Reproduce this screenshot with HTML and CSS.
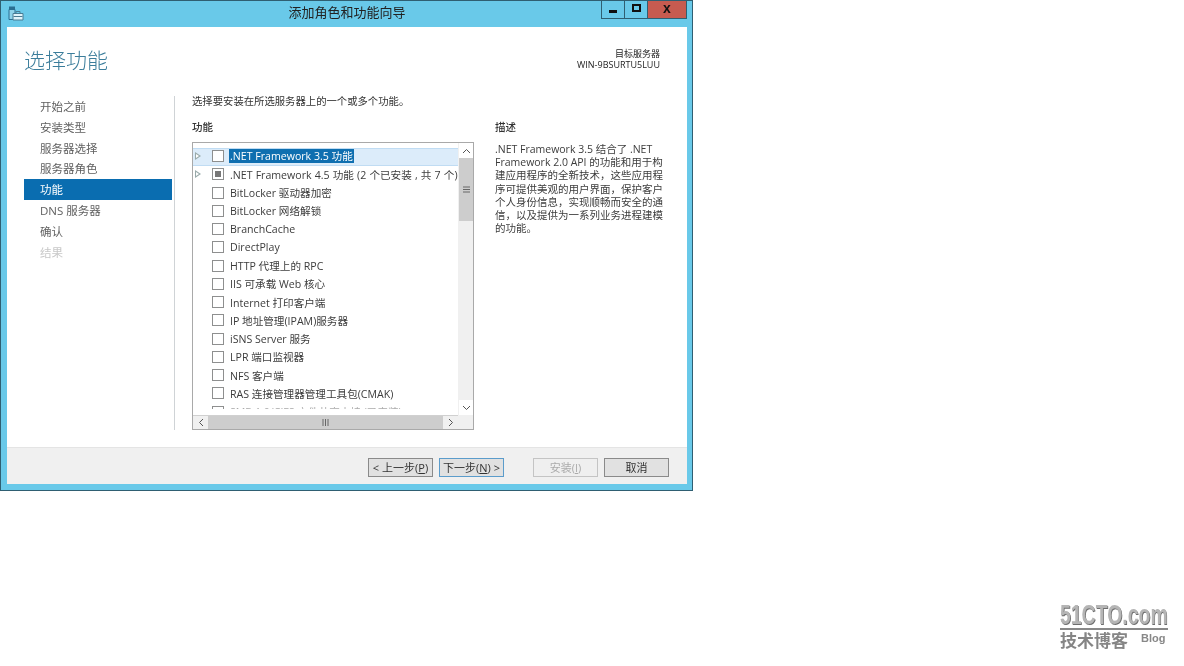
FILE: index.html
```html
<!DOCTYPE html>
<html lang="zh-CN">
<head>
<meta charset="utf-8">
<title>添加角色和功能向导</title>
<link rel="stylesheet" href="styles.css">
</head>
<body>
<div class="window">
  <div class="titlebar">
    <svg class="app-icon" width="16" height="15" viewBox="0 0 16 15"><path d="M1 0.500h6v3H1z" fill="#2a6f92"/><path d="M1 3.500h6v10H1z" fill="#8fd3ea" stroke="#2a6f92"/><path d="M5 7.500h10v6.500H5z" fill="#dff3fa" stroke="#4a7c94"/><path d="M8 7.500V5.500h4v2" fill="none" stroke="#4a7c94"/><path d="M5.500 10.500h9" stroke="#4a7c94"/></svg>
    <div class="title">添加角色和功能向导</div>
    <div class="controls">
      <div class="ctl"><span class="min-glyph"></span></div>
      <div class="ctl"><span class="max-glyph"></span></div>
      <div class="ctl close">x</div>
    </div>
  </div>
  <div class="content">
    <header class="head">
      <h1>选择功能</h1>
      <div class="target"><div>目标服务器</div><div>WIN-9BSURTU5LUU</div></div>
    </header>
    <div class="main">
      <nav class="nav">
        <div class="step">开始之前</div>
        <div class="step">安装类型</div>
        <div class="step">服务器选择</div>
        <div class="step">服务器角色</div>
        <div class="step active">功能</div>
        <div class="step">DNS 服务器</div>
        <div class="step">确认</div>
        <div class="step off">结果</div>
      </nav>
      <section class="pane">
        <p class="intro">选择要安装在所选服务器上的一个或多个功能。</p>
        <div class="cols">
          <div class="col-list">
            <h2>功能</h2>
            <div class="listbox">
              <div class="rows">
                <div class="row sel"><span class="tri"></span><span class="cb"></span><span class="lbl">.NET Framework 3.5 功能</span></div>
                <div class="row"><span class="tri"></span><span class="cb part"></span><span class="wide">.NET Framework 4.5 功能 (2 个已安装 , 共 7 个)</span></div>
                <div class="row"><span class="notri"></span><span class="cb"></span><span>BitLocker 驱动器加密</span></div>
                <div class="row"><span class="notri"></span><span class="cb"></span><span>BitLocker 网络解锁</span></div>
                <div class="row"><span class="notri"></span><span class="cb"></span><span>BranchCache</span></div>
                <div class="row"><span class="notri"></span><span class="cb"></span><span>DirectPlay</span></div>
                <div class="row"><span class="notri"></span><span class="cb"></span><span>HTTP 代理上的 RPC</span></div>
                <div class="row"><span class="notri"></span><span class="cb"></span><span>IIS 可承载 Web 核心</span></div>
                <div class="row"><span class="notri"></span><span class="cb"></span><span>Internet 打印客户端</span></div>
                <div class="row"><span class="notri"></span><span class="cb"></span><span>IP 地址管理(IPAM)服务器</span></div>
                <div class="row"><span class="notri"></span><span class="cb"></span><span>iSNS Server 服务</span></div>
                <div class="row"><span class="notri"></span><span class="cb"></span><span>LPR 端口监视器</span></div>
                <div class="row"><span class="notri"></span><span class="cb"></span><span>NFS 客户端</span></div>
                <div class="row"><span class="notri"></span><span class="cb"></span><span>RAS 连接管理器管理工具包(CMAK)</span></div>
                <div class="row"><span class="notri"></span><span class="cb"></span><span class="dim">SMB 1.0/CIFS 文件共享支持 (已安装)</span></div>
              </div>
              <div class="vbar">
                <div class="sb-btn"><svg width="9" height="6" viewBox="0 0 9 6"><path d="M1 5l3.500-3.500L8 5" fill="none" stroke="#555"/></svg></div>
                <div class="v-track"><div class="v-thumb"><svg width="7" height="7" viewBox="0 0 7 7"><path d="M0 1h7M0 3.500h7M0 6h7" stroke="#666"/></svg></div></div>
                <div class="sb-btn"><svg width="9" height="6" viewBox="0 0 9 6"><path d="M1 1l3.500 3.500L8 1" fill="none" stroke="#555"/></svg></div>
              </div>
              <div class="hbar">
                <div class="sb-btn h"><svg width="6" height="9" viewBox="0 0 6 9"><path d="M5 1L1.500 4.500 5 8" fill="none" stroke="#555"/></svg></div>
                <div class="h-thumb"><svg width="7" height="7" viewBox="0 0 7 7"><path d="M1 0v7M3.500 0v7M6 0v7" stroke="#666"/></svg></div>
                <div class="sb-btn h"><svg width="6" height="9" viewBox="0 0 6 9"><path d="M1 1l3.500 3.500L1 8" fill="none" stroke="#555"/></svg></div>
              </div>
              <div class="corner"></div>
            </div>
          </div>
          <div class="col-desc">
            <h2>描述</h2>
            <p>.NET Framework 3.5 结合了 .NET Framework 2.0 API 的功能和用于构建应用程序的全新技术，这些应用程序可提供美观的用户界面，保护客户个人身份信息，实现顺畅而安全的通信，以及提供为一系列业务进程建模的功能。</p>
          </div>
        </div>
      </section>
    </div>
    <footer class="foot">
      <button class="btn">&lt; 上一步(<u>P</u>)</button>
      <button class="btn next">下一步(<u>N</u>) &gt;</button>
      <button class="btn dis">安装(<u>I</u>)</button>
      <button class="btn">取消</button>
    </footer>
  </div>
</div>
<div class="watermark">
  <div class="wm-top"><span class="wm-logo">51CTO.com</span></div>
  <div class="wm-bottom"><span class="wm-cn">技术博客</span><span class="wm-blog">Blog</span></div>
</div>
</body>
</html>
```
FILE: styles.css
```css
* { box-sizing: border-box; }
html, body { margin: 0; padding: 0; background: #fff; }
body {
  width: 1184px; height: 666px; overflow: hidden; position: relative;
  font-family: "Open Sans", "Noto Sans CJK SC", sans-serif;
  font-size: 11px; color: #3c3c3c;
}
.window {
  width: 693px; height: 491px;
  background: #69c9e9;
  border: 1px solid #2f5f72;
  padding: 0 5px 6px 6px;
  display: flex; flex-direction: column;
  filter: blur(0.35px);
}
.titlebar { height: 26px; flex: none; display: flex; align-items: flex-start; position: relative; }
.app-icon { margin: 5px 0 0 1px; }
.title {
  position: absolute; left: 0; right: 0; top: 2px; text-align: center;
  font-size: 13px; color: #222; line-height: 18px;
}
.controls { margin-left: auto; display: flex; position: relative; }
.ctl {
  width: 24px; height: 18px; border: 1px solid #2f5f72; border-top: 0;
  display: flex; align-items: center; justify-content: center; margin-left: -1px;
}
.close { width: 40px; background: #c75b50; color: #111; font-weight: 700; font-size: 14px; line-height: 15px; padding-bottom: 2px; font-family: "Liberation Sans", sans-serif; }
.min-glyph { width: 8px; height: 3px; background: #111; margin-top: 4px; }
.max-glyph { width: 9px; height: 8px; border: 2px solid #111; margin-top: -3px; }
.content { flex: 1; background: #fff; display: flex; flex-direction: column; min-height: 0; }
.head { height: 69px; flex: none; display: flex; justify-content: space-between; padding: 16px 27px 0 17px; }
h1 { margin: 0; font-weight: 300; font-size: 21px; line-height: 34px; color: #3b7d9b; }
.target { text-align: right; font-size: 9px; line-height: 11px; color: #222; padding-top: 5px; }
.main { height: 334px; flex: none; display: flex; padding-left: 17px; }
.nav { width: 150px; flex: none; }
.step { height: 20.800px; line-height: 20px; padding: 1px 0 0 16px; width: 148px; font-size: 11.500px; color: #606060; }
.active { background: #0a6db0; color: #fff; }
.off { color: #c8c8c8; }
.pane { flex: 1; border-left: 1px solid #cfd3d6; padding-left: 17px; min-width: 0; }
.intro { margin: 0; height: 12px; line-height: 10px; font-size: 10.350px; color: #333; }
.cols { display: flex; margin-top: 8px; }
.col-list { width: 282px; flex: none; }
h2 { margin: 0; font-size: 10.500px; font-weight: 500; line-height: 22px; color: #333; }
.listbox {
  margin-top: 4px; height: 288px; border: 1px solid #a9a9a9; background: #fff;
  display: grid; grid-template-columns: 1fr 15px; grid-template-rows: 1fr 14px; min-height: 0;
}
.rows { overflow: hidden; padding-top: 4.500px; margin-bottom: 6px; min-height: 0; }
.row { height: 18.250px; padding-bottom: 1px; display: flex; align-items: center; white-space: nowrap; font-size: 10.600px; color: #3c3c3c; }
.sel { background: #dcecfa; border-top: 1px solid #c0dcf3; border-bottom: 1px solid #c0dcf3; }
.lbl { background: #0f6fb0; color: #fff; margin-left: -1px; padding: 0 1px; line-height: 14px; }
.wide { word-spacing: 0.4px; }
.dim { color: #aaa; }
.tri, .notri { width: 19px; flex: none; }
.tri { height: 9px; position: relative; }
.tri::before {
  content: ""; display: block; margin-left: 2px; width: 0; height: 0;
  border-left: 6px solid #9aa; border-top: 4.500px solid transparent; border-bottom: 4.500px solid transparent;
}
.tri::after {
  content: ""; position: absolute; left: 3px; top: 2px; width: 0; height: 0;
  border-left: 3.500px solid #fff; border-top: 2.500px solid transparent; border-bottom: 2.500px solid transparent;
}
.cb { width: 12px; height: 12px; flex: none; border: 1px solid #8e8f8f; background: #fff; margin-right: 6px; display: flex; align-items: center; justify-content: center; }
.part::before { content: ""; width: 6px; height: 6px; background: #777; }
.vbar { grid-row: 1; grid-column: 2; display: flex; flex-direction: column; border-left: 1px solid #f0f0f0; min-height: 0; }
.sb-btn { height: 15px; flex: none; display: flex; align-items: center; justify-content: center; background: #fff; }
.sb-btn.h { width: 15px; height: 100%; background: #f0f0f0; }
.v-track { flex: 1; background: #f0f0f0; }
.v-thumb { height: 63px; background: #cdcdcd; display: flex; align-items: center; justify-content: center; }
.hbar { grid-row: 2; grid-column: 1; display: flex; background: #f0f0f0; border-top: 1px solid #d0d0d0; }
.h-thumb { flex: 1; background: #cdcdcd; display: flex; align-items: center; justify-content: center; }
.corner { background: #f0f0f0; grid-row: 2; grid-column: 2; }
.col-desc { margin-left: 21px; width: 168px; }
.col-desc p { margin: 5px 0 0; font-size: 10.500px; line-height: 13.200px; color: #3c3c3c; }
.foot {
  flex: 1; background: #f0f0f0; border-top: 1px solid #e4e4e4; margin-top: 17px;
  display: flex; align-items: flex-start; padding: 10px 0 0 361px;
}
.btn {
  width: 65px; height: 19px; padding: 0; margin-right: 6px; background: #e1e1e1; border: 1px solid #8a8a8a;
  font-family: inherit; font-size: 11px; color: #333; line-height: 15px;
}
.next { border-color: #5b9ccb; margin-right: 29px; }
.dis { background: #efefef; border-color: #c4c4c4; color: #aaa; }
.watermark { position: absolute; left: 1060px; top: 602px; width: 108px; filter: blur(0.4px); }
.wm-top { height: 26px; white-space: nowrap; }
.wm-logo {
  display: inline-block; font-family: "Liberation Sans", sans-serif; font-weight: 700; font-size: 27px; line-height: 27px;
  transform: scaleX(0.72); transform-origin: left top; text-shadow: 1px 1px 0 #6e6e6e; color: #b5b5b5;
}
.wm-bottom { display: flex; align-items: flex-start; border-top: 2px solid #888; }
.wm-cn { font-size: 17px; line-height: 22px; font-weight: 700; color: #858585; }
.wm-blog { font-family: "Liberation Sans", sans-serif; font-size: 11px; font-weight: 700; margin-left: 13px; margin-top: 2px; color: #888; }
```
